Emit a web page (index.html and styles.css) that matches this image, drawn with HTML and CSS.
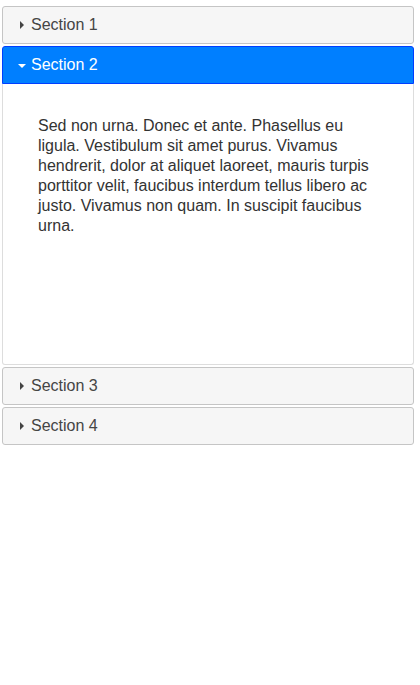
FILE: index.html
```html
<!DOCTYPE html>
<html>
<head>
<meta charset="utf-8">
<link rel="stylesheet" href="styles.css">
</head>
<body>
<div class="accordion">
  <h3 class="header"><span class="icon icon-e"></span>Section 1</h3>
  <h3 class="header active"><span class="icon icon-s"></span>Section 2</h3>
  <div class="content">
    <p>Sed non urna. Donec et ante. Phasellus eu ligula. Vestibulum sit amet purus. Vivamus hendrerit, dolor at aliquet laoreet, mauris turpis porttitor velit, faucibus interdum tellus libero ac justo. Vivamus non quam. In suscipit faucibus urna.</p>
  </div>
  <h3 class="header"><span class="icon icon-e"></span>Section 3</h3>
  <h3 class="header"><span class="icon icon-e"></span>Section 4</h3>
</div>
</body>
</html>
```
FILE: styles.css
```css
html, body {
  margin: 0;
  padding: 0;
  background: #ffffff;
}
body {
  font-family: "Liberation Sans", Arial, Helvetica, sans-serif;
  font-size: 16px;
}
.accordion {
  width: 412px;
  padding: 4px 0 0 2px;
}
.header {
  display: flex;
  align-items: center;
  box-sizing: border-box;
  height: 38px;
  margin: 2px 0 0 0;
  padding: 0 8px 0 11px;
  border: 1px solid #c5c5c5;
  border-radius: 3px;
  background: #f6f6f6;
  color: #454545;
  font-size: 16px;
  font-weight: normal;
  line-height: 20px;
}
.header.active {
  background: #007fff;
  border-color: #003eff;
  color: #ffffff;
  border-radius: 3px 3px 0 0;
}
.icon {
  width: 16px;
  height: 16px;
  margin-right: 1px;
  display: flex;
  align-items: center;
  justify-content: center;
  flex: none;
}
.icon-e::before {
  content: "";
  width: 0;
  height: 0;
  border-top: 4px solid transparent;
  border-bottom: 4px solid transparent;
  border-left: 4px solid #444444;
  margin-left: 0;
}
.icon-s::before {
  content: "";
  width: 0;
  height: 0;
  border-left: 4px solid transparent;
  border-right: 4px solid transparent;
  border-top: 4px solid #ffffff;
  margin-top: 1px;
}
.content {
  box-sizing: border-box;
  height: 281px;
  padding: 16px 35px;
  border: 1px solid #dddddd;
  border-top: 0;
  border-radius: 0 0 3px 3px;
  background: #ffffff;
  color: #333333;
}
.content p {
  margin: 16px 0;
  line-height: 20px;
}
```
